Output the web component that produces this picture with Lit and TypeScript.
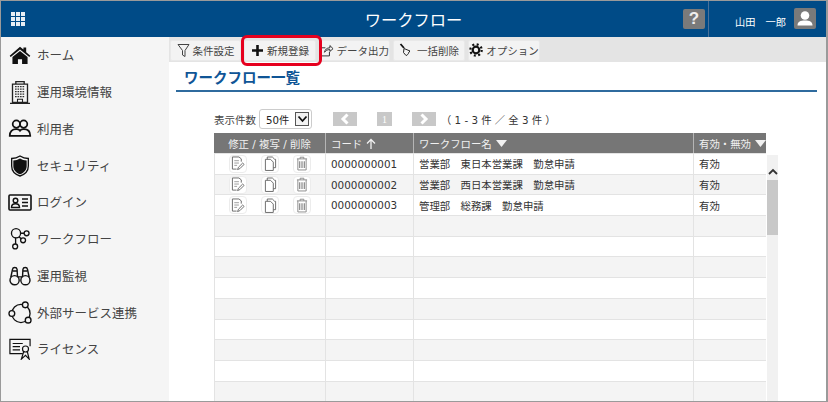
import { LitElement, html, css, svg } from "lit";
import { customElement } from "lit/decorators.js";

const I = (w: number, h: number, vb: string, body: unknown, cls = "") =>
  html`<svg class=${cls} width=${w} height=${h} viewBox=${vb} fill="none" stroke="currentColor">${body}</svg>`;

const navIcons = [
  I(22, 18, "0 0 32 26", svg`<path d="M1 14 16 1l5 4V2h4v7l6 5-1.500 2L16 5 2.500 16z" fill="#111" stroke="none"/><path d="M5 16 16 7l11 9v10h-8v-7h-6v7H5z" fill="#111" stroke="none"/>`),
  I(20, 25, "0 0 24 30", svg`<path d="M3 5h18v22H3zM7 2h10v3H7zM0 28h24" stroke="#222" stroke-width="1.600"/><path d="M6 8h12M6 11h12M6 14h12M6 17h12M6 20h12" stroke="#333" stroke-width="1.500" stroke-dasharray="2 1"/><path d="M9 27v-4h6v4" stroke="#222" stroke-width="1.300"/>`),
  I(24, 19, "0 0 32 26", svg`<circle cx="11" cy="7" r="5" stroke="#111" stroke-width="2.400"/><circle cx="21" cy="7" r="5" stroke="#111" stroke-width="2.400"/><path d="M2 23c0-6 3-9 9-9 2 0 4 .5 5 2 1-1.500 3-2 5-2 6 0 9 3 9 9z" stroke="#111" stroke-width="2.400"/>`),
  I(20, 24, "0 0 24 26", svg`<path d="M12 1c3 2 6 3 10 3v9c0 6-4 10-10 12C6 23 2 19 2 13V4c4 0 7-1 10-3z" stroke="#111" stroke-width="1.600"/><path d="M12 4c2.500 1.500 5 2.300 8 2.500V13c0 5-3 8-8 10-5-2-8-5-8-10V6.500c3-.2 5.500-1 8-2.500z" fill="#111" stroke="none"/>`),
  I(24, 17, "0 0 24 17", svg`<rect x="1" y="1" width="22" height="15" rx="1" stroke="#111" stroke-width="1.600"/><circle cx="7.500" cy="6.500" r="2.300" stroke="#111" stroke-width="1.400"/><path d="M3.500 13.500c0-5 8-5 8 0zM14 5h6M14 8.500h6M14 12h6" stroke="#111" stroke-width="1.400"/>`),
  I(22, 22, "0 0 23 25", svg`<g stroke="#111" stroke-width="1.500"><circle cx="7" cy="6" r="5.200"/><circle cx="19" cy="6" r="2.800"/><circle cx="15" cy="14" r="2.800"/><circle cx="6" cy="21" r="2.800"/><path d="M12 6h4.200M10.500 10l2.500 2.500M6.500 11v7.200"/></g>`),
  I(24, 20, "0 0 26 24", svg`<g stroke="#111" stroke-width="1.700"><circle cx="6.500" cy="17" r="5.500"/><circle cx="19.500" cy="17" r="5.500"/><path d="M2 13.500 4 4c.5-3 5-3 5.500 0l.5 9.500M16 13.500 16.500 4c.5-3 5-3 5.500 0l2 9.500M10 13h6M4.500 6h4.500M17 6h4.500"/></g>`),
  I(24, 23, "0 0 25 24", svg`<g stroke="#111" stroke-width="1.400"><circle cx="13.500" cy="13" r="9.500"/><circle cx="18" cy="4" r="3" fill="#f5f5f5"/><circle cx="4" cy="13" r="3" fill="#f5f5f5"/><circle cx="21" cy="20" r="3" fill="#f5f5f5"/></g>`),
  I(24, 22, "0 0 24 24", svg`<g stroke="#111" stroke-width="1.300"><path d="M15 17H1V1.500h22V9"/><path d="M4 6h11M4 9.500h8M4 13h8"/><circle cx="18" cy="12" r="3.300"/><path d="M16 15l-2.500 8 4.500-4 4 4-2-8"/></g>`),
];

const items = ["ホーム", "運用環境情報", "利用者", "セキュリティ", "ログイン", "ワークフロー", "運用監視", "外部サービス連携", "ライセンス"];

const toolIcons = [
  I(13, 15, "0 0 13 15", svg`<path d="M1 1.500h11L8 7.500v6l-2.500-1.500V7.500z" stroke="#444" stroke-width="1"/>`),
  I(13, 13, "0 0 13 13", svg`<path d="M6.500 1v11M1 6.500h11" stroke="#111" stroke-width="2.600"/>`),
  I(15, 15, "0 0 15 15", svg`<path d="M10.500 9v4.500h-9v-9H6" stroke="#222" stroke-width="1"/><path d="M5 9.500c.5-3 2.500-5 6-5V2l3.500 3.500L11 8.500V6.500c-3 0-4.500 1-6 3z" stroke="#222" stroke-width="1"/>`),
  I(15, 15, "0 0 15 15", svg`<path d="M1.500 1 5 5" stroke="#111" stroke-width="1.800"/><path d="M4 4.500 10 7l-1 1c-.5 2-2 3.500-3 3.500L3.500 8.500z" stroke="#222" stroke-width="1" transform="translate(1 1)"/>`),
  I(14, 14, "0 0 14 14", svg`<circle cx="7" cy="7" r="3.300" stroke="#111" stroke-width="2.200"/><circle cx="7" cy="7" r="5.700" stroke="#111" stroke-width="2.200" stroke-dasharray="2 2.480"/>`),
];
const tools = ["条件設定", "新規登録", "データ出力", "一括削除", "オプション"];

const editIcon = I(14, 15, "0 0 15 16", svg`<g stroke="#666" stroke-width="1"><path d="M11 6V3L8.500 1H1.500v13H6"/><path d="M3.500 5h5M3.500 7.500h5M3.500 10h3" stroke="#999"/><path d="M7 14.500l1-2.500 4.500-4.500 1.500 1.500-4.500 4.500z"/></g>`);
const copyIcon = I(13, 15, "0 0 14 16", svg`<g stroke="#666" stroke-width="1"><path d="M3.500 3.500V1H9l2.500 2.500H12.500v9H10"/><path d="M1.500 3.500H7L10 6.500v9H1.500z"/></g>`);
const trashIcon = I(12, 15, "0 0 13 16", svg`<g stroke="#888" stroke-width="1"><path d="M1 3h11M4.500 3V1.200h4V3M2 3v12h9V3"/><path d="M4 5.500v7.500M6.500 5.500v7.500M9 5.500v7.500" stroke-width="1.300"/></g>`);

const rows = [
  ["0000000001", "営業部　東日本営業課　勤怠申請", "有効"],
  ["0000000002", "営業部　西日本営業課　勤怠申請", "有効"],
  ["0000000003", "管理部　総務課　勤怠申請", "有効"],
  ...Array.from({ length: 9 }, () => ["", "", ""]),
];

@customElement("app-root")
export class AppRoot extends LitElement {
  static styles = css`
    :host {
      display: block;
      width: 828px;
      height: 402px;
      box-sizing: border-box;
      overflow: hidden;
      border: 1px solid #9a9a9a;
      border-right-width: 2px;
      font-family: "DejaVu Sans", "Noto Sans CJK JP", sans-serif;
      color: #333;
      background: #fff;
      position: relative;
    }
    header {
      height: 36px;
      background: #004b87;
      display: flex;
      align-items: center;
      color: #fff;
    }
    .apps { display: grid; grid-template-columns: repeat(3, 4px); gap: 1px; margin-left: 10px; width: 14px; }
    .apps i { height: 4px; background: #e8eef4; }
    .title { flex: 1; text-align: center; font-size: 16.300px; padding-left: 119px; }
    .help {
      width: 22px; height: 20px; background: #7a7a7a; border-radius: 2px;
      font: bold 17px/20px "Liberation Sans", sans-serif; text-align: center; color: #eee;
      margin-right: 3px;
    }
    .user {
      width: 118px; height: 36px; box-sizing: border-box; border-left: 1px solid #4a7199;
      display: flex; align-items: center; justify-content: flex-end;
      font-size: 10.200px; padding-right: 10px; gap: 8px;
    }
    .user span { margin-top: 4px; white-space: pre; }
    .avatar { width: 22px; height: 21px; background: #7a7a7a; border-radius: 2px; display: flex; margin-top: -1px; }
    .body { display: flex; height: 364px; }
    nav { width: 168px; flex: none; background: #f5f5f5; }
    .nav-item { height: 36.750px; display: flex; align-items: center; font-size: 12.500px; color: #444; white-space: nowrap; }
    .nav-item span.txt { margin-top: -1px; }
    .nav-icon { width: 36px; flex: none; display: flex; justify-content: center; color: #111; box-sizing: border-box; padding-left: 1px; }
    main { flex: 1; min-width: 0; display: flex; flex-direction: column; }
    .toolbar { height: 25px; background: #e4e4e4; display: flex; align-items: center; gap: 3px; padding-left: 1px; flex: none; }
    .tool {
      height: 21px; box-sizing: border-box; background: #f3f3f3; border: 1px solid #e9e9e9; border-radius: 2px;
      display: flex; align-items: center; justify-content: center; gap: 3px;
      font-size: 10.500px; color: #444; white-space: nowrap; margin-top: 1px;
    }
    .heading {
      margin: 4px 9px 0 7px; height: 26px; box-sizing: border-box; padding-left: 8px; flex: none;
      border-bottom: 2px solid #2f6b9e; color: #0f5596; font-size: 14.500px; font-weight: 700; line-height: 25px;
    }
    .pager {
      display: flex; align-items: center; margin: 16px 0 0 45px; height: 22px; font-size: 10.500px; color: #444; flex: none;
    }
    .select {
      margin-left: 3px; width: 53px; height: 20px; box-sizing: border-box; border: 1px solid #ccc; border-radius: 3px; background: #fff;
      display: flex; align-items: center; padding-left: 6px; justify-content: space-between; padding-right: 2px; font-size: 10.200px; color: #222;
    }
    .caret { width: 14px; height: 14px; box-sizing: border-box; border: 1px solid #555; background: #f2f2f2; display: flex; align-items: center; justify-content: center; }
    .pg { background: #c8c8c8; height: 14px; display: flex; align-items: center; justify-content: center; color: #fff; }
    .pg.arrow { width: 24px; }
    .pg.num { width: 15px; font: 10px "Liberation Serif", serif; }
    .range { margin-left: 5px; font-size: 10.300px; white-space: pre; color: #333; }
    .table-wrap { position: relative; margin: 3px 0 0 45px; width: 564px; flex: 1; min-height: 0; }
    .thead, .row { display: grid; width: 552px; box-sizing: border-box; }
    .thead { grid-template-columns: 112px 88px 280px 72px; height: 20px; background: #767676; color: #f1f1f1; font-size: 10.400px; border-bottom: 1px solid #e4e4e4; box-sizing: content-box; }
    .thead > div { display: flex; align-items: center; padding-left: 5px; gap: 4px; border-right: 1px solid #b5b5b5; white-space: nowrap; box-sizing: border-box; }
    .thead > div:first-child { justify-content: center; padding: 0; }
    .thead > div:last-child { border-right: 0; }
    .row { grid-template-columns: 111px 88px 280px 72px; height: 20.700px; border-bottom: 1px solid #e3e3e3; border-left: 1px solid #e3e3e3; font-size: 10.400px; color: #333; }
    .row:nth-child(even) { background: #f4f4f4; }
    .row > div { border-right: 1px solid #e3e3e3; display: flex; align-items: center; padding-left: 5px; white-space: pre; box-sizing: border-box; min-width: 0; }
    .row > div:last-child { border-right: 0; }
    .row > .acts { padding: 0 0 0 14px; gap: 14px; }
    .act { width: 18px; height: 18px; background: #fff; border-radius: 4px; border: 1px solid #ececec; box-sizing: border-box; display: flex; align-items: center; justify-content: center; }
    .act svg { flex: none; }
    .scroll { position: absolute; left: 553px; top: 22px; width: 11px; bottom: 0; background: #f1f1f1; }
    .scroll .up { height: 25px; box-sizing: border-box; padding-top: 13px; display: flex; justify-content: center; }
    .scroll .thumb { height: 55px; background: #c8c8c8; }
    .mark {
      position: absolute; left: 240px; top: 34px; width: 81px; height: 31px; box-sizing: border-box;
      border: 3px solid #e6001e; border-radius: 6px;
    }
  `;

  render() {
    return html`
      <header>
        <div class="apps">${Array.from({ length: 9 }, () => html`<i></i>`)}</div>
        <div class="title">ワークフロー</div>
        <div class="help">?</div>
        <div class="user">
          <span>山田　一郎</span>
          <div class="avatar">${I(22, 21, "0 0 22 21", svg`<circle cx="11" cy="7.500" r="4.300" fill="#fff" stroke="none"/><path d="M3.500 17.500c0-4 3-5 7.500-5s7.500 1 7.500 5z" fill="#fff" stroke="none"/>`)}</div>
        </div>
      </header>
      <div class="body">
        <nav>
          ${items.map((t, i) => html`<div class="nav-item"><span class="nav-icon">${navIcons[i]}</span><span class="txt">${t}</span></div>`)}
        </nav>
        <main>
          <div class="toolbar">
            ${tools.map((t, i) => html`<div class="tool" style="width:${[71, 72, 71, 72, 72][i]}px">${toolIcons[i]}${t}</div>`)}
          </div>
          <div class="heading">ワークフロー一覧</div>
          <div class="pager">
            表示件数
            <div class="select">50件
              <span class="caret">${I(11, 8, "0 0 11 8", svg`<path d="M1.500 1.500 5.500 6l4-4.500" stroke="#111" stroke-width="1.800"/>`)}</span>
            </div>
            <div class="pg arrow" style="margin-left:21px">${I(10, 12, "0 0 10 12", svg`<path d="M7.500 1.500 3 6l4.500 4.500" stroke="#fff" stroke-width="3"/>`)}</div>
            <div class="pg num" style="margin-left:20px">1</div>
            <div class="pg arrow" style="margin-left:20px">${I(10, 12, "0 0 10 12", svg`<path d="M2.500 1.500 7 6l-4.500 4.500" stroke="#fff" stroke-width="3"/>`)}</div>
            <div class="range">（ 1 - 3 件 ／ 全 3 件 ）</div>
          </div>
          <div class="table-wrap">
            <div class="thead">
              <div>修正 / 複写 / 削除</div>
              <div>コード ${I(10, 11, "0 0 10 11", svg`<path d="M5 11V1.500M1 5.500l4-4 4 4" stroke="#f1f1f1" stroke-width="1.300"/>`)}</div>
              <div>ワークフロー名 ${I(11, 8, "0 0 11 8", svg`<path d="M0 1h11L5.500 8z" fill="#f1f1f1" stroke="none"/>`)}</div>
              <div>有効・無効 ${I(11, 8, "0 0 11 8", svg`<path d="M0 1h11L5.500 8z" fill="#f1f1f1" stroke="none"/>`)}</div>
            </div>
            <div class="tbody">
              ${rows.map((r) => html`<div class="row">
                <div class="acts">${r[0] ? html`<span class="act">${editIcon}</span><span class="act">${copyIcon}</span><span class="act">${trashIcon}</span>` : ""}</div>
                <div>${r[0]}</div><div>${r[1]}</div><div>${r[2]}</div>
              </div>`)}
            </div>
            <div class="scroll">
              <div class="up">${I(10, 7, "0 0 10 7", svg`<path d="M1 6l4-4 4 4" stroke="#333" stroke-width="1.800"/>`)}</div>
              <div class="thumb"></div>
            </div>
          </div>
        </main>
      </div>
      <div class="mark"></div>
    `;
  }
}
